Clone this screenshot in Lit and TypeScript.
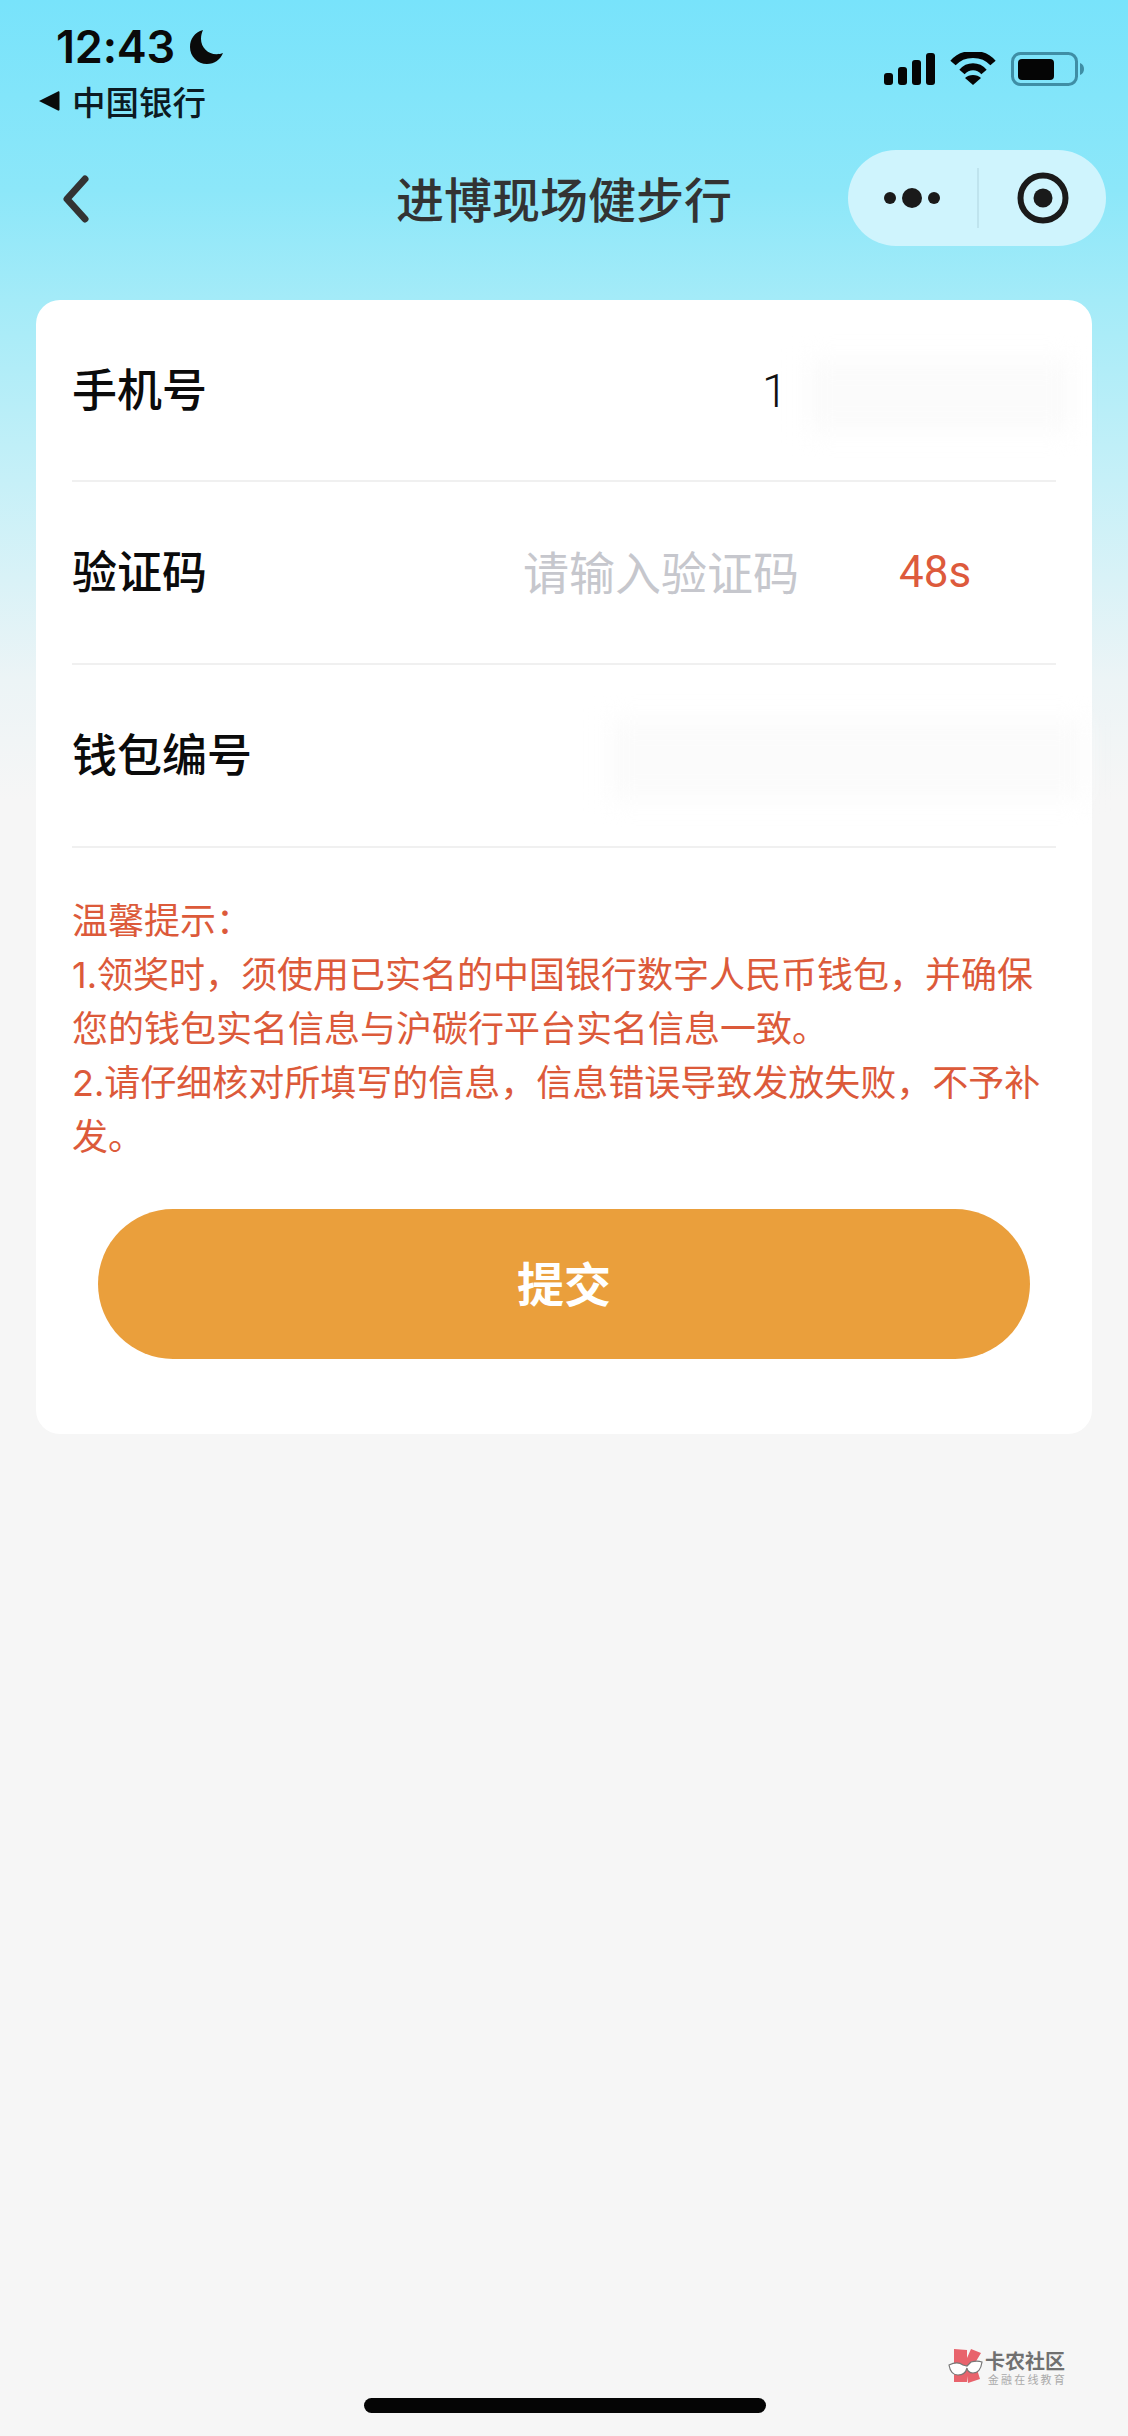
import { LitElement, html, css } from "lit";
import { customElement } from "lit/decorators.js";

@customElement("app-root")
export class AppRoot extends LitElement {
  static styles = css`
    :host {
      display: block;
      width: 1128px;
      height: 2436px;
      overflow: hidden;
      font-family: "Noto Sans CJK SC", "Inter", sans-serif;
    }
    .page {
      height: 2436px;
      display: flex;
      flex-direction: column;
      box-sizing: border-box;
      background: linear-gradient(180deg, #78e3fb 0px, #8ce7f9 190px, #a4ebf8 300px, #c6f0f8 480px, #ecf4f6 680px, #f6f6f6 800px);
    }
    .status {
      height: 130px;
      display: flex;
      justify-content: space-between;
      flex-shrink: 0;
    }
    .status-left {
      padding: 24px 0 0 38px;
    }
    .time-row {
      display: flex;
      align-items: center;
      height: 46px;
      padding-left: 18px;
      gap: 14px;
    }
    .time {
      font-family: "Inter", sans-serif;
      font-size: 45px;
      font-weight: 600;
      line-height: 46px;
      color: #0a0a0a;
      letter-spacing: -0.2px;
    }
    .back-app {
      display: flex;
      align-items: center;
      height: 40px;
      margin-top: 11px;
      gap: 12px;
    }
    .back-app span {
      font-size: 33.5px;
      line-height: 40px;
      font-weight: 500;
      color: #0c1a22;
    }
    .status-right {
      display: flex;
      align-items: center;
      gap: 14px;
      padding: 52px 44px 0 0;
      height: 34px;
    }
    .nav {
      height: 96px;
      margin-top: 20px;
      display: grid;
      grid-template-columns: 1fr auto 1fr;
      align-items: center;
      flex-shrink: 0;
    }
    .nav-back {
      padding: 2px 0 0 60px;
      display: flex;
      align-items: center;
    }
    .title {
      font-size: 48px;
      font-weight: 500;
      line-height: 60px;
      color: #333;
      text-align: center;
      margin-top: -2px;
    }
    .capsule-wrap {
      display: flex;
      justify-content: flex-end;
      padding-right: 22px;
    }
    .capsule {
      width: 258px;
      height: 96px;
      border-radius: 48px;
      background: #cff4fd;
      display: grid;
      grid-template-columns: 129px 2px 127px;
      align-items: center;
      justify-items: center;
    }
    .capsule i {
      display: block;
      width: 2px;
      height: 60px;
      background: #bfe4ee;
    }
    .capsule svg {
      display: block;
    }
    .card {
      margin: 54px 36px 0;
      background: #fff;
      border-radius: 24px;
      height: 1134px;
      box-sizing: border-box;
      padding: 0 36px;
      flex-shrink: 0;
    }
    .row {
      position: relative;
      height: 183px;
      box-sizing: border-box;
      border-bottom: 2px solid #f0f0f0;
      display: flex;
      align-items: center;
      padding-bottom: 5px;
    }
    .row:first-child {
      height: 182px;
    }
    .label {
      font-size: 45px;
      line-height: 60px;
      font-weight: 500;
      color: #0b0b0b;
    }
    .value {
      position: absolute;
      left: 690px;
      top: 63px;
      font-family: "Roboto", sans-serif;
      font-size: 46px;
      font-weight: 300;
      line-height: 56px;
      color: #111;
    }
    .placeholder {
      margin-left: auto;
      font-size: 46px;
      line-height: 60px;
      color: #c6c7cd;
      font-weight: 400;
    }
    .count {
      width: 257px;
      box-sizing: border-box;
      padding: 3px 0 0 100px;
      font-family: "Roboto", sans-serif;
      font-size: 44px;
      line-height: 60px;
      color: #dd5a3c;
    }
    .smudge {
      position: absolute;
      background: #fbfbfb;
      filter: blur(12px);
    }
    .smudge.a {
      left: 735px;
      top: 60px;
      width: 265px;
      height: 72px;
    }
    .smudge.b {
      left: 537px;
      top: 55px;
      width: 476px;
      height: 80px;
    }
    .tips {
      margin: 0;
      padding-top: 46px;
      font-family: "Inter", "Noto Sans CJK SC", sans-serif;
      font-size: 36px;
      line-height: 54px;
      color: #dc5a3a;
      font-weight: 400;
    }
    .tips div {
      white-space: nowrap;
    }
    .submit {
      display: flex;
      align-items: center;
      justify-content: center;
      width: 932px;
      height: 150px;
      margin: 45px 0 0 26px;
      padding-bottom: 5px;
      box-sizing: border-box;
      border-radius: 75px;
      background: #ea9f3c;
      color: #fff;
      font-size: 47px;
      font-weight: 700;
      line-height: 60px;
    }
    .footer {
      margin-top: auto;
      height: 102px;
      position: relative;
      flex-shrink: 0;
    }
    .mark {
      position: absolute;
      left: 948px;
      top: 15px;
      display: flex;
      align-items: flex-start;
      gap: 1px;
    }
    .mark-text {
      display: flex;
      flex-direction: column;
      align-items: flex-end;
    }
    .mark-a {
      font-size: 20px;
      line-height: 22px;
      margin-top: 1px;
      font-weight: 700;
      color: #707070;
      white-space: nowrap;
    }
    .mark-b {
      font-size: 11px;
      line-height: 14px;
      color: #aaaaaa;
      white-space: nowrap;
      letter-spacing: 2.2px;
      margin-right: -2px;
    }
    .indicator {
      position: absolute;
      left: 364px;
      top: 64px;
      width: 402px;
      height: 15px;
      border-radius: 8px;
      background: #050505;
    }
  `;

  render() {
    return html`
      <div class="page">
        <div class="status">
          <div class="status-left">
            <div class="time-row">
              <span class="time">12:43</span>
              <svg width="36" height="36" viewBox="0 0 36 36"><path d="M14 1C5.5 3.5 1 10 1 18c0 9.5 7.5 17 17 17 7.5 0 13.500-4.500 16-11-1.800.8-4 1.200-6.500 1.200C19 25.200 12 18.500 12 10c0-3.500.8-6.500 2-9z" fill="#0a0a0a"/></svg>
            </div>
            <div class="back-app">
              <svg width="22" height="22" viewBox="0 0 22 22"><path d="M1 11 20 1.500c.8-.4 1.500.1 1.500 1v17c0 .9-.7 1.400-1.500 1z" fill="#0a0a0a"/></svg>
              <span>中国银行</span>
            </div>
          </div>
          <div class="status-right">
            <svg width="53" height="34" viewBox="0 0 53 34" fill="#050505">
              <rect x="1" y="21" width="9" height="12" rx="3"/>
              <rect x="15" y="15" width="9" height="18" rx="3"/>
              <rect x="29" y="8" width="9" height="25" rx="3"/>
              <rect x="43" y="1" width="9" height="32" rx="3"/>
            </svg>
            <svg width="46" height="34" viewBox="0 0 46 34" style="margin-right:1px">
              <path d="M3 11C13-.5 33-.5 43 11" fill="none" stroke="#050505" stroke-width="7"/>
              <path d="M12 20c6-7 16-7 22 0" fill="none" stroke="#050505" stroke-width="7"/>
              <path d="M23 33 15 26c4-4 12-4 16 0z" fill="#050505"/>
            </svg>
            <svg width="73" height="34" viewBox="0 0 73 34">
              <rect x="1.500" y="1.500" width="64" height="31" rx="8" fill="none" stroke="#3f8ea5" stroke-width="3"/>
              <rect x="7" y="7" width="36" height="21" rx="4" fill="#050505"/>
              <path d="M69 11c3 1 4 3.500 4 6s-1 5-4 6z" fill="#3f8ea5"/>
            </svg>
          </div>
        </div>

        <div class="nav">
          <div class="nav-back">
            <svg width="30" height="48" viewBox="0 0 30 48"><path d="M25 4 7 24l18 20" fill="none" stroke="#333" stroke-width="7" stroke-linecap="round" stroke-linejoin="round"/></svg>
          </div>
          <div class="title">进博现场健步行</div>
          <div class="capsule-wrap">
            <div class="capsule">
              <svg width="60" height="24" viewBox="0 0 60 24" fill="#1a1a1a">
                <circle cx="7" cy="12" r="6"/><circle cx="29" cy="12" r="10"/><circle cx="51" cy="12" r="6"/>
              </svg>
              <i></i>
              <svg width="52" height="52" viewBox="0 0 52 52">
                <circle cx="26" cy="26" r="22.500" fill="none" stroke="#1a1a1a" stroke-width="6"/>
                <circle cx="26" cy="26" r="9.500" fill="#1a1a1a"/>
              </svg>
            </div>
          </div>
        </div>

        <div class="card">
          <div class="row">
            <span class="label">手机号</span>
            <span class="smudge a"></span>
            <span class="value">1</span>
          </div>
          <div class="row">
            <span class="label">验证码</span>
            <span class="placeholder">请输入验证码</span>
            <span class="count">48s</span>
          </div>
          <div class="row">
            <span class="label">钱包编号</span>
            <span class="smudge b"></span>
          </div>
          <div class="tips">
            <div>温馨提示：</div>
            <div>1.领奖时，须使用已实名的中国银行数字人民币钱包，并确保</div>
            <div>您的钱包实名信息与沪碳行平台实名信息一致。</div>
            <div>2.请仔细核对所填写的信息，信息错误导致发放失败，不予补</div>
            <div>发。</div>
          </div>
          <div class="submit">提交</div>
        </div>

        <div class="footer">
          <div class="mark">
            <svg width="36" height="35" viewBox="0 0 36 35">
              <path d="M6 0 19 1v8l4-9 10 4-6 10 5 16-12 4-1-7v6H6z" fill="#e8636c"/>
              <path d="M1 16c4-2 10-3 14 0l4 1 4-4c4-1 8-1 11 0-1 7-4 11-9 11-4 0-6-3-6-5-1 4-4 7-9 7-5 0-8-4-9-10z" fill="#fff" stroke="#777" stroke-width="1.200"/>
            </svg>
            <div class="mark-text">
              <span class="mark-a">卡农社区</span>
              <span class="mark-b">金融在线教育</span>
            </div>
          </div>
          <div class="indicator"></div>
        </div>
      </div>
    `;
  }
}
